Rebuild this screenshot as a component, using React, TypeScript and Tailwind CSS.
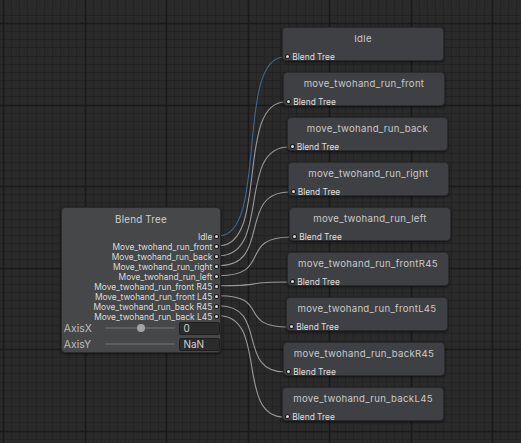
import React from "react";

const outputs = [
  "Idle",
  "Move_twohand_run_front",
  "Move_twohand_run_back",
  "Move_twohand_run_right",
  "Move_twohand_run_left",
  "Move_twohand_run_front R45",
  "Move_twohand_run_front L45",
  "Move_twohand_run_back R45",
  "Move_twohand_run_back L45",
];

const nodes = [
  { title: "Idle", x: 282.3, y: 27.3 },
  { title: "move_twohand_run_front", x: 283.3, y: 72.3 },
  { title: "move_twohand_run_back", x: 286.7, y: 117.3 },
  { title: "move_twohand_run_right", x: 287.7, y: 162.3 },
  { title: "move_twohand_run_left", x: 289.3, y: 207.3 },
  { title: "move_twohand_run_frontR45", x: 287.3, y: 252.3 },
  { title: "move_twohand_run_frontL45", x: 286.3, y: 297.3 },
  { title: "move_twohand_run_backR45", x: 283.3, y: 342.3 },
  { title: "move_twohand_run_backL45", x: 282.3, y: 387.3 },
];

const W = 521;
const H = 443;
const MAJOR = 81.5;
const MINOR = MAJOR / 10;

function Grid() {
  const minorV: number[] = [];
  const minorH: number[] = [];
  const majorV: number[] = [];
  const majorH: number[] = [];
  for (let k = -1; k < 70; k++) {
    const x = 3 + k * MINOR;
    if (x >= -1 && x <= W + 1) (((k % 10) + 10) % 10 === 0 ? majorV : minorV).push(Math.round(x) + 0.5);
    const y = 23 + k * MINOR;
    if (y >= -1 && y <= H + 1) (((k % 10) + 10) % 10 === 0 ? majorH : minorH).push(Math.round(y) + 0.5);
  }
  return (
    <svg width={W} height={H} className="absolute inset-0">
      <rect width={W} height={H} fill="#2a2a2a" />
      {minorV.map((x, i) => (
        <line key={"mv" + i} x1={x} y1={0} x2={x} y2={H} stroke="#232323" strokeWidth={1} />
      ))}
      {minorH.map((y, i) => (
        <line key={"mh" + i} x1={0} y1={y} x2={W} y2={y} stroke="#232323" strokeWidth={1} />
      ))}
      {majorV.map((x, i) => (
        <line key={"Mv" + i} x1={x} y1={0} x2={x} y2={H} stroke="#1a1a1a" strokeWidth={1.5} />
      ))}
      {majorH.map((y, i) => (
        <line key={"Mh" + i} x1={0} y1={y} x2={W} y2={y} stroke="#1a1a1a" strokeWidth={1.5} />
      ))}
    </svg>
  );
}

function Edges() {
  return (
    <svg width={W} height={H} className="absolute inset-0">
      {nodes.map((n, i) => {
        const x0 = 219;
        const y0 = 235.7 + i * 10;
        const x1 = n.x + 2;
        const y1 = n.y + 29.7;
        const d = (x1 - x0) * 0.75;
        return (
          <path
            key={i}
            d={`M ${x0} ${y0} C ${x0 + d} ${y0}, ${x1 - d} ${y1}, ${x1} ${y1}`}
            fill="none"
            stroke={i === 0 ? "#3b6894" : "#989898"}
            strokeWidth={1.1}
          />
        );
      })}
    </svg>
  );
}

function Dot() {
  return <span className="block w-[3px] h-[3px] rounded-full bg-[#d8d8d8] ring-1 ring-[#1c1c1c] shrink-0" />;
}

function BlendTreeNode() {
  return (
    <div
      className="absolute left-[60.7px] top-[207.3px] w-[160.6px] h-[145.4px] rounded-[4px] bg-[#464749] border border-[#2a2a2a] shadow-[0_1px_3px_rgba(0,0,0,0.6)] flex flex-col"
      style={{ fontFamily: "Inter, 'Noto Sans', sans-serif" }}
    >
      <div className="h-[22px] shrink-0 pt-[2px] flex items-center justify-center text-[9.8px] text-[#d0d0d0] tracking-[0.2px]">
        Blend Tree
      </div>
      <div className="pt-[1.5px] shrink-0 flex flex-col">
        {outputs.map((o) => (
          <div key={o} className="h-[10px] flex items-center justify-end gap-[3px] pr-[2px]">
            <span className="text-[8.4px] leading-[10px] text-[#dcdcdc]">{o}</span>
            <Dot />
          </div>
        ))}
      </div>
      <div className="flex flex-col shrink-0 gap-[3px]">
        <div className="h-[13px] flex items-center">
          <span className="w-[43px] pl-[2px] text-[10.5px] text-[#bcbcbc] leading-[13px]">AxisX</span>
          <div className="relative w-[71px] h-[13px] flex items-center">
            <div className="w-full h-[2px] bg-[#5f5f60] rounded-full" />
            <div className="absolute left-[32px] top-[2.5px] w-[8px] h-[8px] rounded-full bg-[#a4a4a4]" />
          </div>
          <div className="ml-[4px] w-[41px] h-[13px] rounded-[2px] bg-[#2b2b2b] border border-[#202020] flex items-center pl-[3px] text-[10px] text-[#d2d2d2] leading-[11px]">
            0
          </div>
        </div>
        <div className="h-[13px] flex items-center">
          <span className="w-[43px] pl-[2px] text-[10.5px] text-[#bcbcbc] leading-[13px]">AxisY</span>
          <div className="relative w-[71px] h-[13px] flex items-center">
            <div className="w-full h-[2px] bg-[#5f5f60] rounded-full" />
          </div>
          <div className="ml-[4px] w-[41px] h-[13px] rounded-[2px] bg-[#2b2b2b] border border-[#202020] flex items-center pl-[3px] text-[10px] text-[#d2d2d2] leading-[11px]">
            NaN
          </div>
        </div>
      </div>
    </div>
  );
}

function ClipNode({ title, x, y }: { title: string; x: number; y: number }) {
  return (
    <div
      className="absolute w-[161.4px] h-[33.4px] rounded-[4px] bg-[#3f4043] border border-[#2b2b2d] shadow-[0_1px_3px_rgba(0,0,0,0.6)] flex flex-col"
      style={{ left: x, top: y, fontFamily: "Inter, 'Noto Sans', sans-serif" }}
    >
      <div className="h-[20px] shrink-0 pt-[1px] flex items-center justify-center text-[9.6px] leading-[12px] text-[#cacaca] tracking-[0.3px]">
        {title}
      </div>
      <div className="flex shrink-0 items-center gap-[3px] pl-[3px] h-[12px] mt-[2.7px]">
        <Dot />
        <span className="text-[8.4px] leading-[12px] text-[#dedede]">Blend Tree</span>
      </div>
    </div>
  );
}

export default function App() {
  return (
    <div className="relative w-[521px] h-[443px] overflow-hidden bg-[#2a2a2a]">
      <Grid />
      <Edges />
      <BlendTreeNode />
      {nodes.map((n) => (
        <ClipNode key={n.title} {...n} />
      ))}
    </div>
  );
}
